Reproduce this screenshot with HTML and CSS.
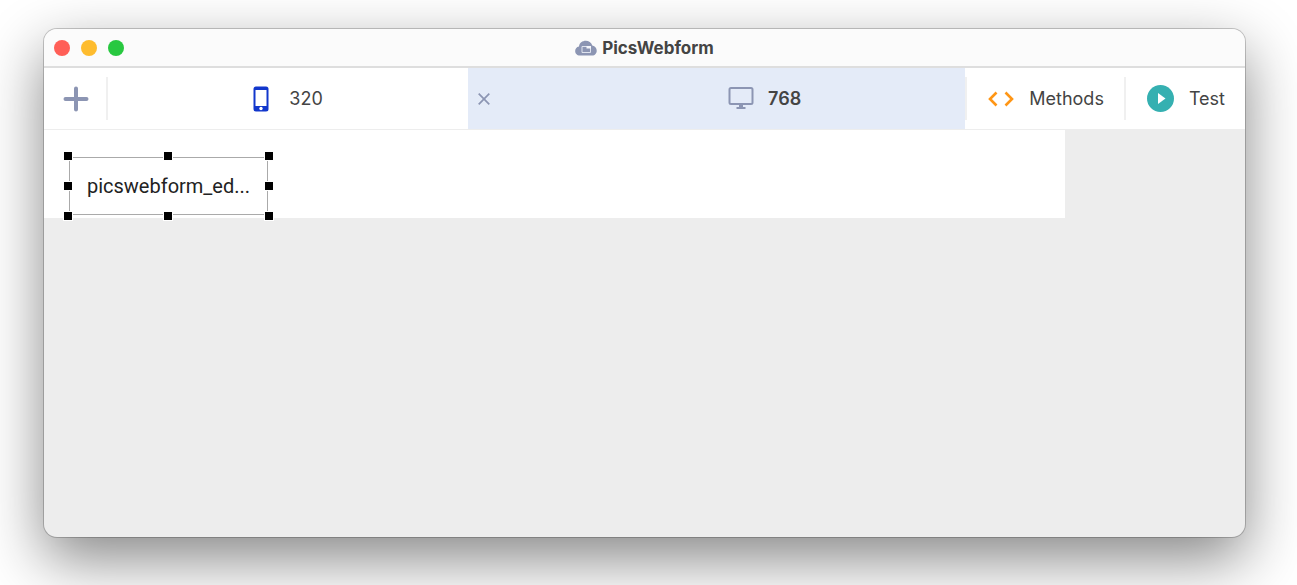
FILE: index.html
```html
<!DOCTYPE html>
<html lang="en">
<head>
    <meta charset="UTF-8">
    <meta name="viewport" content="width=device-width, initial-scale=1.0">
    <title>PicsWebform</title>
    <link rel="stylesheet" href="styles.css">
</head>
<body>
    <div class="window">
        <header class="titlebar">
            <div class="window-buttons">
                <button type="button" class="dot dot-close" aria-label="Close"></button>
                <button type="button" class="dot dot-minimize" aria-label="Minimize"></button>
                <button type="button" class="dot dot-zoom" aria-label="Zoom"></button>
            </div>
            <h1>
                <svg width="22" height="16" viewBox="0 0 22 16">
                    <path d="M5 15.5C-1 15.500-1.500 7.500 4 6.500C4.500 -0.500 15.500 -1.500 17.300 5.500C23.500 6.500 23 15.500 17 15.500z" fill="#8c95b3"/>
                    <path d="M7 6.500h8.500v6H7z" fill="none" stroke="#dfe3ee"/>
                    <path d="M11.500 6H16v2.500h-4.500z" fill="#f4f5fa"/>
                </svg>
                PicsWebform
            </h1>
        </header>

        <nav class="toolbar">
            <button type="button" class="btn-add" aria-label="Add breakpoint">
                <svg width="26" height="26" viewBox="0 0 26 26">
                    <path d="M13 2.500v21M2.500 13h21" stroke="#8c95b3" stroke-width="4" stroke-linecap="round"/>
                </svg>
            </button>

            <div class="tabs">
                <div class="tab">
                    <button type="button" class="tab-label">
                        <svg width="16" height="26" viewBox="0 0 16 26">
                            <rect x="0.500" y="0.500" width="15" height="25" rx="2.500" fill="#1237cc"/>
                            <path d="M2.500 4h11v16h-11z" fill="#fff"/>
                            <circle cx="8" cy="22.500" r="1.700" fill="#fff"/>
                        </svg>
                        320
                    </button>
                </div>
                <div class="tab active">
                    <button type="button" class="tab-close" aria-label="Remove breakpoint">
                        <svg width="12" height="12" viewBox="0 0 12 12">
                            <path d="M0.700 0.700l10.600 10.600M11.300 0.700L0.700 11.300" stroke="#8c95b3" stroke-width="1.700"/>
                        </svg>
                    </button>
                    <button type="button" class="tab-label">
                        <svg width="26" height="26" viewBox="0 0 26 26">
                            <rect x="1.500" y="2" width="23" height="16" rx="1.500" fill="none" stroke="#8c95b3" stroke-width="2"/>
                            <path d="M11 18h4v3h2.500v2h-9v-2H11z" fill="#8c95b3"/>
                        </svg>
                        768
                    </button>
                </div>
            </div>

            <button type="button" class="btn-tool btn-methods">
                <svg width="26" height="16" viewBox="0 0 26 16">
                    <path d="M8.500 1.500L2 8l6.500 6.500M17.500 1.500L24 8l-6.500 6.500" fill="none" stroke="#ff9615" stroke-width="2.600"/>
                </svg>
                Methods
            </button>
            <button type="button" class="btn-tool btn-test">
                <svg width="27" height="27" viewBox="0 0 27 27">
                    <circle cx="13.500" cy="13.500" r="13.500" fill="#35b0b1"/>
                    <path d="M11 8v11l7.500-5.500z" fill="#fff"/>
                </svg>
                Test
            </button>
        </nav>

        <main class="canvas">
            <div class="form">
                <div class="widget">
                    <button type="button" class="widget-button">picswebform_ed...</button>
                    <span class="handle top left"></span>
                    <span class="handle top center"></span>
                    <span class="handle top right"></span>
                    <span class="handle middle left"></span>
                    <span class="handle middle right"></span>
                    <span class="handle bottom left"></span>
                    <span class="handle bottom center"></span>
                    <span class="handle bottom right"></span>
                </div>
            </div>
        </main>
    </div>
</body>
</html>
```

FILE: styles.css
```css
* {
    box-sizing: border-box;
}

body {
    display: flex;
    min-height: 100vh;
    margin: 0;
    padding: 29px 52px 48px 44px;
    overflow: hidden;
    background: #fff;
    color: #444;
    font-family: Inter, sans-serif;
}

button {
    padding: 0;
    border: none;
    background: none;
    color: inherit;
    font: inherit;
    cursor: pointer;
}

.window {
    display: flex;
    flex: 1;
    flex-direction: column;
    overflow: hidden;
    border-radius: 13px;
    background: #ededed;
    box-shadow: 0 0 0 1px rgba(0, 0, 0, 0.2), 0 22px 60px rgba(0, 0, 0, 0.48);
}

.titlebar {
    display: grid;
    grid-template-columns: 1fr auto 1fr;
    align-items: center;
    height: 39px;
    border-bottom: 2px solid #dedede;
    background: #fbfbfb;
}

.titlebar h1 {
    display: flex;
    align-items: center;
    gap: 5px;
    margin: 0;
    font-size: 17px;
    font-weight: 700;
    line-height: 36px;
}

.window-buttons {
    display: flex;
    gap: 11px;
    padding-left: 10px;
}

.dot {
    width: 16px;
    height: 16px;
    border-radius: 50%;
}

.dot-close {
    background: #ff5f57;
}

.dot-minimize {
    background: #febc2e;
}

.dot-zoom {
    background: #28c840;
}

.toolbar {
    display: flex;
    height: 62px;
    border-bottom: 1px solid #ededed;
    background: #fff;
    font-size: 18px;
}

.btn-add {
    display: flex;
    align-items: center;
    justify-content: center;
    width: 64px;
    background: linear-gradient(#f0f0f0, #f0f0f0) right center / 2px 43px no-repeat;
}

.tabs {
    display: grid;
    flex: 1;
    grid-template-columns: 42fr 58fr;
}

.tab {
    display: flex;
}

.tab.active {
    background: #e4ebf8;
    font-weight: 600;
}

.tab-label {
    display: flex;
    flex: 1;
    align-items: center;
    justify-content: center;
    gap: 20px;
}

.tab.active .tab-label {
    gap: 14px;
    padding-left: 64px;
}

.tab-close {
    display: flex;
    align-items: center;
    justify-content: center;
    width: 32px;
}

.btn-tool {
    display: flex;
    align-items: center;
    gap: 15px;
    padding: 0 20px;
    background: linear-gradient(#f0f0f0, #f0f0f0) left center / 2px 43px no-repeat;
}

.btn-methods {
    padding-left: 23px;
}

.btn-test {
    padding-left: 23px;
}

.canvas {
    flex: 1;
}

.form {
    width: 85%;
    height: 88px;
    padding: 27px 25px 0;
    background: #fff;
}

.widget {
    position: relative;
    width: 199px;
    height: 58px;
    border: 1px solid #aaa;
}

.widget-button {
    width: 100%;
    height: 100%;
    color: #222;
    font-family: Roboto, sans-serif;
    font-size: 20px;
}

/* selection handles, laid over the widget's border */
.handle {
    position: absolute;
    width: 8px;
    height: 8px;
    outline: 1px solid #fff;
    background: #000;
}

.handle.top {
    top: -6px;
}

.handle.middle {
    top: 24px;
}

.handle.bottom {
    bottom: -6px;
}

.handle.left {
    left: -6px;
}

.handle.center {
    left: 94px;
}

.handle.right {
    right: -6px;
}
```
